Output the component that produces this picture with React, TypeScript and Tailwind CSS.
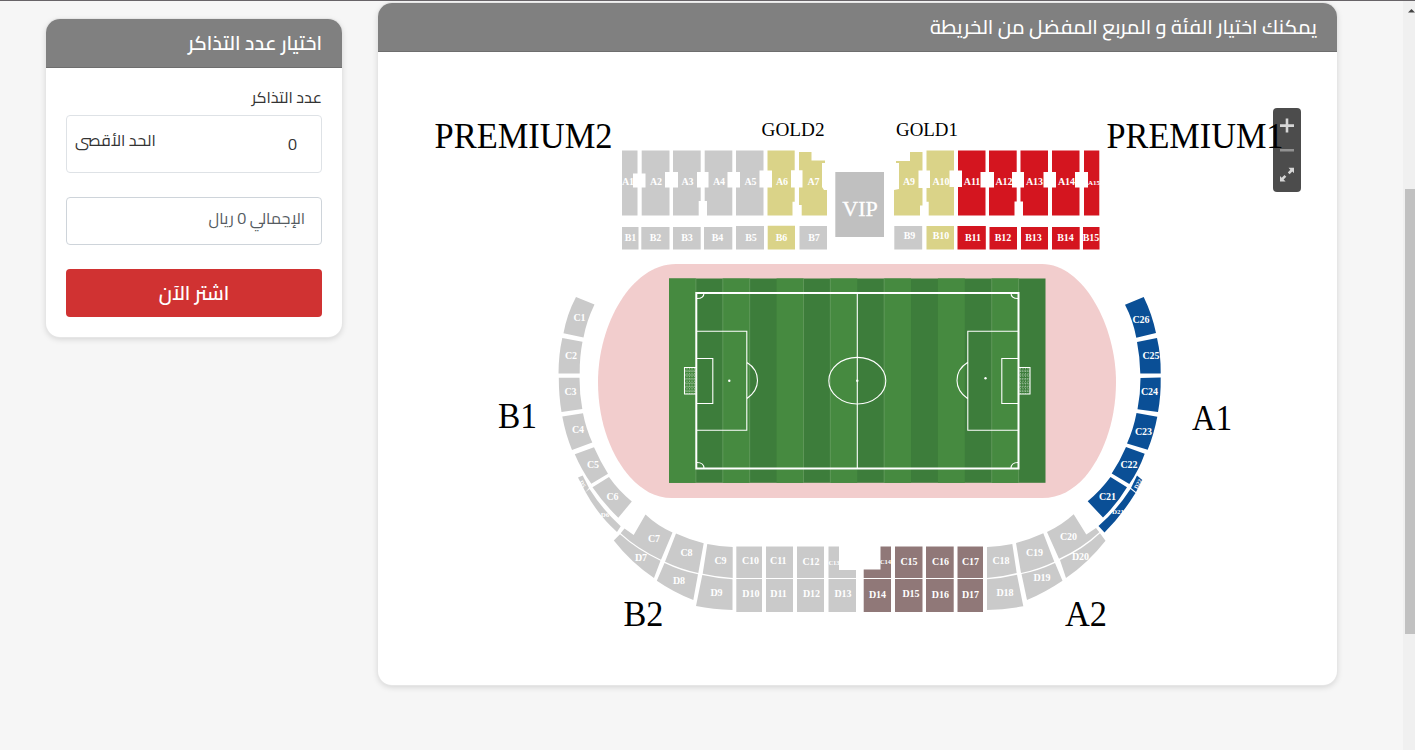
import React from "react";

type Section = { id: string; points: string; x: number; y: number; size?: number; rotate?: number };

const GRAY = "#cacaca";
const GOLD = "#dad388";
const RED = "#d4151f";
const BLUE = "#0a4f96";
const BROWN = "#907878";

const box = (x1: number, y1: number, x2: number, y2: number) =>
  `M${x1} ${y1}H${x2}V${y2}H${x1}Z`;

const graySections: Section[] = [
  { id: "A1", points: box(622, 150.5, 637.5, 215.5), x: 628, y: 185 },
  { id: "A2", points: box(641.7, 150.5, 669.5, 215.5), x: 656, y: 185 },
  { id: "A3", points: box(673, 150.5, 700.7, 215.5), x: 687.5, y: 185 },
  { id: "A4", points: box(704.7, 150.5, 732.3, 215.5), x: 719, y: 185 },
  { id: "A5", points: box(736, 150.5, 763.5, 215.5), x: 750.5, y: 185 },
  { id: "B1", points: box(622, 227, 638.5, 249.5), x: 630.5, y: 241 },
  { id: "B2", points: box(641.3, 227, 669.5, 249.5), x: 655.5, y: 241 },
  { id: "B3", points: box(673, 227, 700.7, 249.5), x: 687, y: 241 },
  { id: "B4", points: box(704, 227, 732.3, 249.5), x: 717.5, y: 241 },
  { id: "B5", points: box(736, 226, 764, 249.5), x: 751, y: 241 },
  { id: "B7", points: box(799.5, 226, 827, 249.5), x: 814, y: 241 },
  { id: "B9", points: box(894.3, 226, 922.2, 249.5), x: 909.5, y: 239 },
  { id: "C1", points: "M576 297L594.5 304.5Q586.5 321 583.5 337.5L563.5 333.3Q567 314 576 297Z", x: 579.5, y: 321 },
  { id: "C2", points: "M562.3 338L582.5 341.7Q579.5 357 579.7 373.5H558.5Q558.5 355 562.3 338Z", x: 571, y: 359 },
  { id: "C3", points: "M558.8 377.7H579.5Q579.5 394 582.3 409L561.5 412Q558.8 396 558.8 377.7Z", x: 570.5, y: 395 },
  { id: "C4", points: "M562.3 416.5L583 413.3Q586 429 592.3 442.5L572 450Q565.5 434 562.3 416.5Z", x: 578, y: 433 },
  { id: "C5", points: "M574.8 454.3L594 447.3Q600 461 608 473.8L591.3 483.8Q581.5 470 574.8 454.3Z", x: 593, y: 468 },
  { id: "C6", points: "M592.5 487.3L609 477Q618.5 490.5 631.8 501.5L618.3 517.7Q604 504 592.5 487.3Z", x: 612.5, y: 500 },
  { id: "D5", points: "M578 477.5L582.7 475.5L589 488L585.5 492Z", x: 582.5, y: 486, size: 6, rotate: 60 },
  { id: "D6", points: "M585.5 492L589.5 489Q602 509 620.7 526.3L617 532Q598 515 585.5 492Z", x: 605, y: 517, size: 7 },
  { id: "C7", points: "M645.5 514.5Q657 525.5 672.5 532.5L661 559.7Q637 548.5 620.7 533.3L624.5 528.5L633.7 535Z", x: 654, y: 542 },
  { id: "D7", points: "M620 534.3Q637 549.8 660.5 560.7L654 578Q631 562.5 613.8 540.5Z", x: 641, y: 561 },
  { id: "C8", points: "M676 533.5Q689 539.5 703.7 543.3L698.3 573Q681 569.5 665 561.8Z", x: 686.5, y: 556 },
  { id: "D8", points: "M664.5 563Q681 571 698 574.3L693.3 600Q674 592.5 656.8 580.7Z", x: 679, y: 584 },
  { id: "C9", points: "M707.3 544Q719 546.5 732.7 547V578Q717 577 702.7 573.7Z", x: 720.5, y: 564 },
  { id: "D9", points: "M702.3 575Q717 578.3 732.5 579.3V610Q713 609.5 696 606Z", x: 716.5, y: 596 },
  { id: "C10", points: box(736.3, 546.5, 762, 578), x: 750.5, y: 564 },
  { id: "D10", points: box(736.3, 579, 762, 612), x: 750.8, y: 597 },
  { id: "C11", points: box(766, 546.5, 793, 578), x: 778.3, y: 564 },
  { id: "D11", points: box(766, 579, 793, 612), x: 778.5, y: 597 },
  { id: "C12", points: box(797, 546.5, 824, 578), x: 811, y: 565 },
  { id: "D12", points: box(797, 579, 824, 612), x: 811.5, y: 597 },
  { id: "C13", points: "M828.5 546.5H839V570H856V578H828.5Z", x: 834, y: 564.5, size: 6.5 },
  { id: "D13", points: box(828.5, 579, 856, 612), x: 843, y: 597 },
  { id: "C18", points: "M987 547Q1000 546.5 1012.3 544L1016.7 573Q1002 577 987 578Z", x: 1001, y: 564 },
  { id: "D18", points: "M987 579.3Q1002 578.3 1017 574.7L1023.3 606.3Q1005 609.5 987 610Z", x: 1005, y: 596 },
  { id: "C19", points: "M1016 543Q1030 539.5 1043.3 533.3L1054.3 561.7Q1038 569.5 1021 573Z", x: 1034.5, y: 556 },
  { id: "D19", points: "M1021.5 574Q1038 571 1055 563L1062.5 580.7Q1045 592.5 1027 600Z", x: 1042, y: 581 },
  { id: "C20", points: "M1047 532Q1062 525 1073.7 514.3L1086.3 534.5L1096 528L1099.3 532.3Q1081 549 1059 558.7Z", x: 1068.5, y: 540 },
  { id: "D20", points: "M1060 560Q1083 549.5 1100 533.3L1105.5 540.7Q1088 563 1066 578Z", x: 1080.5, y: 560 },
];

const goldSections: Section[] = [
  { id: "A6", points: box(767.5, 150.5, 794.7, 215.5), x: 782, y: 185 },
  { id: "A7", points: "M799 152H811.5V160.5H825V163H822V187L824 190H827V215.5H799Z", x: 813.5, y: 185 },
  { id: "A9", points: "M910 152H922.5V215.5H894V190L899 189V163H896V161H910Z", x: 909, y: 185 },
  { id: "A10", points: box(926.5, 150.5, 954, 215.5), x: 941, y: 185 },
  { id: "B6", points: box(767.7, 225.7, 795, 249.5), x: 781.5, y: 241 },
  { id: "B10", points: box(926.5, 226, 954, 249.5), x: 941, y: 239 },
];

const redSections: Section[] = [
  { id: "A11", points: box(958, 150.5, 985.5, 215.5), x: 972, y: 185 },
  { id: "A12", points: box(989, 150.5, 1016.7, 215.5), x: 1004, y: 185 },
  { id: "A13", points: box(1020.5, 150.5, 1048, 215.5), x: 1034.5, y: 185 },
  { id: "A14", points: box(1052, 150.5, 1079.5, 215.5), x: 1066.5, y: 185 },
  { id: "A15", points: box(1084, 150.5, 1099.3, 215.5), x: 1094, y: 184.5, size: 7 },
  { id: "B11", points: box(957.5, 226, 985.8, 249.5), x: 973, y: 241 },
  { id: "B12", points: box(989.5, 227, 1017, 249.5), x: 1003, y: 241 },
  { id: "B13", points: box(1021, 227, 1048, 249.5), x: 1033.5, y: 241 },
  { id: "B14", points: box(1052, 227, 1079.7, 249.5), x: 1065.5, y: 241 },
  { id: "B15", points: box(1083, 227, 1099.5, 249.5), x: 1091, y: 241 },
];

const blueSections: Section[] = [
  { id: "C26", points: "M1125 304.7L1143.7 297Q1152 314 1156 333L1136.3 337.7Q1133 320 1125 304.7Z", x: 1141, y: 323 },
  { id: "C25", points: "M1137 342L1157 338Q1161 355 1160.7 373.5H1140.3Q1140 357 1137 342Z", x: 1151, y: 359 },
  { id: "C24", points: "M1140.5 378L1160.7 377.5Q1161 396 1158 412L1137.5 409.3Q1140.5 394 1140.5 378Z", x: 1149.5, y: 395 },
  { id: "C23", points: "M1136.5 413L1157.3 416.7Q1154 434 1147.7 449.7L1127 443.5Q1133.5 429 1136.5 413Z", x: 1143.5, y: 435 },
  { id: "C22", points: "M1126 447L1144.7 453.7Q1139 470 1129.3 484L1111.7 473.5Q1120 461 1126 447Z", x: 1129, y: 468 },
  { id: "C21", points: "M1110.5 477L1127 487.3Q1117 504 1103 517.5L1087.7 501.3Q1101 490 1110.5 477Z", x: 1107.5, y: 500 },
  { id: "D22", points: "M1137 475.5L1142.3 480L1136 492L1131 488Z", x: 1138, y: 486, size: 6, rotate: -60 },
  { id: "D21", points: "M1130.5 489L1135.5 493Q1122 515 1104.5 532.5L1098.5 526Q1117 510 1130.5 489Z", x: 1118, y: 514, size: 7 },
];

const brownSections: Section[] = [
  { id: "C14", points: "M880.5 546.5H891V578H863.7V569.5H880.5Z", x: 885.5, y: 564, size: 6.5 },
  { id: "D14", points: box(863.7, 579, 891, 612), x: 877.5, y: 598 },
  { id: "C15", points: box(895, 546.5, 922.5, 578), x: 909, y: 565 },
  { id: "D15", points: box(895, 579, 922.5, 612), x: 911, y: 597 },
  { id: "C16", points: box(926, 546.5, 953.7, 578), x: 940.5, y: 565 },
  { id: "D16", points: box(926, 579, 953.7, 612), x: 940.3, y: 598 },
  { id: "C17", points: box(957.5, 546.5, 983, 578), x: 970.5, y: 565 },
  { id: "D17", points: box(957.5, 579, 983, 612), x: 970.5, y: 598 },
];

const groups = [
  { fill: GRAY, sections: graySections },
  { fill: GOLD, sections: goldSections },
  { fill: RED, sections: redSections },
  { fill: BLUE, sections: blueSections },
  { fill: BROWN, sections: brownSections },
];

// stairways cut out of the upper stand
const gaps = [
  [633, 173.5, 645.5, 187.5],
  [665, 172, 678, 187.5],
  [697, 172, 708.5, 187.5],
  [727.5, 172, 740, 187.5],
  [759.5, 170.5, 772, 187.5],
  [791, 170.3, 802.5, 187.5],
  [698.7, 201, 707, 216],
  [792.5, 201.7, 797, 216],
  [797, 205, 801.7, 216],
  [918.5, 170.5, 930, 188],
  [949.5, 170.5, 962, 187],
  [980.5, 172, 994, 187.5],
  [1012, 172, 1024, 187.5],
  [1043.5, 172, 1056, 187.5],
  [1075, 172, 1088, 187.5],
  [920, 205.5, 924, 216],
  [924, 201.7, 928.7, 216],
  [1014.5, 201.5, 1023, 216],
];

const titles = [
  { text: "PREMIUM2", x: 434.5, y: 148, size: 35.5, width: 178 },
  { text: "PREMIUM1", x: 1106.5, y: 148, size: 35.5, width: 177 },
  { text: "GOLD2", x: 761.5, y: 136, size: 18, width: 63 },
  { text: "GOLD1", x: 896, y: 136, size: 18, width: 62 },
  { text: "B1", x: 498, y: 428, size: 35.5, width: 39 },
  { text: "A1", x: 1192, y: 430, size: 35.5, width: 40 },
  { text: "B2", x: 623.5, y: 626, size: 35.5, width: 40 },
  { text: "A2", x: 1065, y: 626, size: 35.5, width: 42 },
];

const STRIPE = 376.5 / 14;

const Pitch = () => (
  <g>
    <path
      d="M1042 264C1083 264 1116 325 1116 382C1116 425 1101 458 1085 477C1073 490 1060 498 1042 498H672C655 498 642 490 630 477C613 458 598 425 598 382C598 325 631 264 676 264Z"
      fill="#f2cdcd"
    />
    <rect x={669} y={278.5} width={376.5} height={204.3} fill="#3d7d3b" />
    {Array.from({ length: 7 }, (_, i) => (
      <rect key={i} x={669 + i * 2 * STRIPE} y={278.5} width={STRIPE} height={204.3} fill="#468a40" />
    ))}
    {[1, 2, 3, 5, 6, 8, 12, 13].map((i) => (
      <path key={i} d={`M${669 + i * STRIPE} 278.5V482.8`} stroke="#7fae76" strokeOpacity={0.7} strokeWidth={0.7} />
    ))}
    <g fill="none" stroke="#fff" strokeWidth={1.1}>
      <rect x={696.3} y={293} width={322.2} height={175.5} strokeWidth={2} />
      <path d="M857.3 293V468.5" />
      <ellipse cx={857.3} cy={380.7} rx={28.5} ry={23.3} />
      <path d="M697 331.3H746.8V430.3H697M697 358.5H712.8V403.5H697M747 362.5Q757.5 369 757.5 380.5Q757.5 391 747 398.5" />
      <path d="M1018 331.3H967.8V430.3H1018M1018 358.5H1001.8V403.5H1018M967.5 362.5Q957 369 957 380.5Q957 391 967.5 398.5" />
      <path d="M704 293Q704 298.5 697 298.5M704 468.5Q704 462.5 697 462.5M1011 293Q1011 298.5 1018 298.5M1011 468.5Q1011 462.5 1018 462.5" />
      <path d="M696 367.5H684.5V394H696M1019 367.5H1030V394H1019" />
      <path
        d="M687 368V394M689.5 368V394M692 368V394M694.5 368V394M1020.5 368V394M1023 368V394M1025.5 368V394M1028 368V394M685 371H696M685 375H696M685 379H696M685 383H696M685 387H696M685 391H696M1019 371H1030M1019 375H1030M1019 379H1030M1019 383H1030M1019 387H1030M1019 391H1030"
        strokeWidth={0.7}
        strokeDasharray="1.5 1"
        strokeOpacity={0.6}
      />
    </g>
    <g fill="#fff">
      <circle cx={729.3} cy={380.8} r={1.2} />
      <circle cx={857.3} cy={380.8} r={1.2} />
      <circle cx={985.5} cy={378.3} r={1.2} />
    </g>
  </g>
);

const StadiumMap = () => (
  <svg
    className="block h-[633px] w-[959px] font-['Liberation_Serif',serif]"
    viewBox="378 52 959 633"
  >
    <Pitch />
    {groups.map(({ fill, sections }) => (
      <g key={fill} fill={fill}>
        {sections.map((s) => (
          <path key={s.id} d={s.points} />
        ))}
      </g>
    ))}
    {gaps.map(([x1, y1, x2, y2]) => (
      <path key={`${x1}-${y1}`} d={box(x1, y1, x2, y2)} fill="#fff" />
    ))}
    <rect x={835.3} y={172} width={48.7} height={65} fill="#c0c0c0" />
    <text x={860} y={216} fill="#fff" stroke="#fff" strokeWidth={0.3} fontSize={22} textAnchor="middle">
      VIP
    </text>
    <g fill="#fff" fontWeight={700} textAnchor="middle">
      {groups.flatMap(({ sections }) =>
        sections.map((s) => (
          <text
            key={s.id}
            x={s.x}
            y={s.y}
            fontSize={s.size ?? 10}
            transform={s.rotate ? `rotate(${s.rotate} ${s.x} ${s.y - 2})` : undefined}
          >
            {s.id}
          </text>
        )),
      )}
    </g>
    <g fill="#000">
      {titles.map((t) => (
        <text
          key={t.text}
          x={t.x}
          y={t.y}
          fontSize={t.size}
          textLength={t.width}
          lengthAdjust="spacingAndGlyphs"
        >
          {t.text}
        </text>
      ))}
    </g>
  </svg>
);

const ZoomControls = () => (
  <div className="absolute top-[56px] right-9 h-[84px] w-7 rounded bg-black/70">
    <svg className="block h-full w-full" viewBox="0 0 28 84" fill="#d6d6d6">
      <path d="M12.7 10.5H15.3V16.2H21V19H15.3V24.5H12.7V19H7V16.2H12.7Z" />
      <path d="M7 41H21V43.6H7Z" fill="#929292" />
      <path d="M15.5 59.7H21V65.2L19.3 63.5L16.6 66.2L14.8 64.4L17.3 61.7ZM12.6 73.5H7V68L8.7 69.7L11.5 67L13.3 68.8L10.6 71.5Z" />
    </svg>
  </div>
);

const TicketForm = () => (
  <aside className="mt-[19px] h-[318px] w-[296px] shrink-0 overflow-hidden rounded-[14px] bg-white shadow-[0_0_0_1px_#e6e6e6,0_2px_6px_rgba(0,0,0,0.15)]">
    <h2 className="flex h-[49px] items-center border-b border-[#6e6e6e] bg-[#808080] px-5 text-[19.7px] font-semibold text-white">
      <span>اختيار عدد التذاكر</span>
    </h2>
    <div className="flex flex-col px-5 pt-[17px] text-[#333]">
      <label className="h-[30px] text-[16px] leading-6">
        <span>عدد التذاكر</span>
      </label>
      <div className="flex h-[58px] items-center justify-between rounded border border-[#dee2e6] pr-6 pl-2">
        <span className="text-[16px]">0</span>
        <span className="-mt-2 text-[16px]">الحد الأقصى</span>
      </div>
      <div className="mt-6 flex h-12 items-center rounded border border-[#ced4da] px-4 text-[16px] text-[#555b61]">
        <span className="-mt-1.5">الإجمالي 0 ريال</span>
      </div>
      <button className="mt-6 h-12 rounded bg-[#d03232] text-[19.7px] font-semibold text-white">
        <span>اشتر الآن</span>
      </button>
    </div>
  </aside>
);

const Scrollbar = () => (
  <div className="ml-auto flex h-full w-3 shrink-0 flex-col items-end bg-[#f0f0f0]">
    <svg className="h-[188px] w-[10px] shrink-0" viewBox="0 0 10 188">
      <path d="M3 11.5L6.5 8L10 11.5Z" fill="#444" />
    </svg>
    <div className="h-[445px] w-[10px] bg-[#c1c1c1]" />
  </div>
);

export default function App() {
  return (
    <div className="h-[750px] w-[1415px] overflow-hidden border-t border-[#686468] bg-[#f6f6f6] font-['Cairo','Noto_Sans_Arabic','DejaVu_Sans',sans-serif]">
      <div className="flex h-full">
        <div className="-mt-px flex gap-9 pl-[46px]" dir="rtl">
          <main className="relative mt-[3px] h-[682px] w-[959px] shrink-0 overflow-hidden rounded-[14px] bg-white shadow-[0_0_0_1px_#e6e6e6,0_2px_6px_rgba(0,0,0,0.15)]">
            <h1 className="flex h-[49px] items-center border-b border-[#6e6e6e] bg-[#808080] px-5 text-[20px] font-medium text-white">
              <span>يمكنك اختيار الفئة و المربع المفضل من الخريطة</span>
            </h1>
            <div className="relative" dir="ltr">
              <StadiumMap />
              <ZoomControls />
            </div>
          </main>
          <TicketForm />
        </div>
        <Scrollbar />
      </div>
    </div>
  );
}
